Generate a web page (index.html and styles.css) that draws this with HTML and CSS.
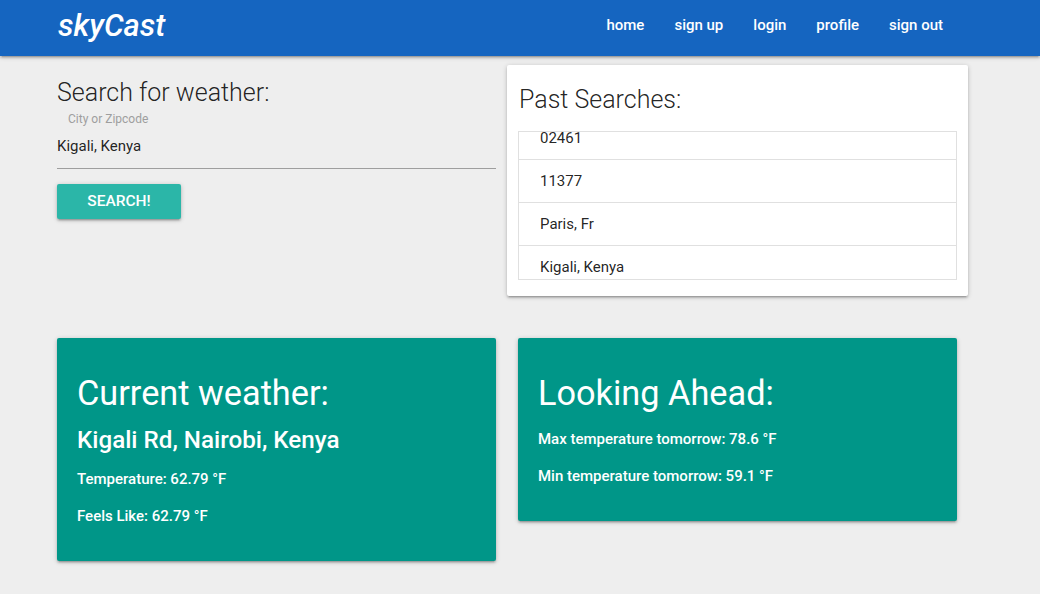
FILE: index.html
```html
<!DOCTYPE html>
<html lang="en">
<head>
<meta charset="utf-8">
<title>skyCast</title>
<link rel="stylesheet" href="styles.css">
</head>
<body>
<nav class="navbar">
  <div class="nav-inner">
    <a class="brand" href="#">skyCast</a>
    <ul class="nav-links">
      <li><a href="#">home</a></li>
      <li><a href="#">sign up</a></li>
      <li><a href="#">login</a></li>
      <li><a href="#">profile</a></li>
      <li><a href="#">sign out</a></li>
    </ul>
  </div>
</nav>
<main class="page">
  <section class="top-row">
    <div class="search-col">
      <h5 class="section-title">Search for weather:</h5>
      <div class="field">
        <label class="field-label">City or Zipcode</label>
        <div class="field-value">Kigali, Kenya</div>
      </div>
      <button class="btn">SEARCH!</button>
    </div>
    <div class="past-card">
      <h5 class="section-title past-title">Past Searches:</h5>
      <div class="past-list">
        <ul class="past-items">
          <li>02461</li>
          <li>11377</li>
          <li>Paris, Fr</li>
          <li>Kigali, Kenya</li>
        </ul>
      </div>
    </div>
  </section>
  <section class="bottom-row">
    <div class="weather-card">
      <h4>Current weather:</h4>
      <h5>Kigali Rd, Nairobi, Kenya</h5>
      <p>Temperature: 62.79 °F</p>
      <p>Feels Like: 62.79 °F</p>
    </div>
    <div class="weather-card">
      <h4>Looking Ahead:</h4>
      <p>Max temperature tomorrow: 78.6 °F</p>
      <p>Min temperature tomorrow: 59.1 °F</p>
    </div>
  </section>
</main>
</body>
</html>
```
FILE: styles.css
```css
* { box-sizing: border-box; }
html, body { margin: 0; padding: 0; }
body {
  background: #eeeeee;
  font-family: Roboto, "Noto Sans", "Liberation Sans", sans-serif;
  color: rgba(0,0,0,0.87);
  height: 594px;
  overflow: hidden;
}
.navbar {
  height: 56px;
  background: #1565c0;
  box-shadow: 0 2px 2px 0 rgba(0,0,0,0.14), 0 3px 1px -2px rgba(0,0,0,0.12), 0 1px 5px 0 rgba(0,0,0,0.2);
  position: relative;
  z-index: 2;
}
.nav-inner {
  height: 56px;
  display: flex;
  align-items: center;
  justify-content: space-between;
  padding: 0 82px 6px 58px;
}
.brand {
  color: #fff;
  text-decoration: none;
  font-size: 31px;
  font-style: italic;
  font-weight: 500;
  letter-spacing: 0;
}
.nav-links {
  list-style: none;
  margin: 0;
  padding: 0;
  display: flex;
}
.nav-links a {
  display: block;
  padding: 0 15px;
  color: #fff;
  text-decoration: none;
  font-size: 15px;
  font-weight: 500;
}
.page {
  padding: 9px 0 0 57px;
}
.top-row {
  display: grid;
  grid-template-columns: 439px 461px;
  column-gap: 11px;
  align-items: start;
}
.section-title {
  font-size: 25px;
  font-weight: 300;
  line-height: 1.1;
  margin: 0;
}
.search-col .section-title { margin-top: 14px; }
.field {
  border-bottom: 1px solid #9e9e9e;
  padding-bottom: 13px;
}
.field-label {
  display: block;
  padding-left: 11px;
  margin-top: 5px;
  font-size: 12px;
  color: #9e9e9e;
  line-height: 14px;
}
.field-value {
  margin-top: 11px;
  font-size: 15px;
  line-height: 18px;
}
.btn {
  margin-top: 15px;
  width: 124px;
  height: 35px;
  border: none;
  border-radius: 2px;
  background: #2bb6a8;
  color: #fff;
  font-family: inherit;
  font-size: 15.5px;
  font-weight: 500;
  box-shadow: 0 2px 2px 0 rgba(0,0,0,0.14), 0 3px 1px -2px rgba(0,0,0,0.12), 0 1px 5px 0 rgba(0,0,0,0.2);
  padding: 0;
}
.past-card {
  background: #fff;
  border-radius: 2px;
  box-shadow: 0 2px 2px 0 rgba(0,0,0,0.14), 0 3px 1px -2px rgba(0,0,0,0.12), 0 1px 5px 0 rgba(0,0,0,0.2);
  padding: 21px 11px 16px 11px;
}
.past-title { padding-left: 1px; margin-bottom: 17px; }
.past-list {
  height: 149px;
  border: 1px solid #e0e0e0;
  overflow: hidden;
}
.past-items {
  list-style: none;
  margin: -15px 0 0 0;
  padding: 0;
}
.past-items li {
  height: 43px;
  line-height: 42px;
  border-bottom: 1px solid #e0e0e0;
  padding-left: 21px;
  font-size: 15px;
}
.past-items li:last-child { border-bottom: none; }
.bottom-row {
  margin-top: 42px;
  display: grid;
  grid-template-columns: 439px 439px;
  column-gap: 22px;
  align-items: start;
}
.weather-card {
  background: #009688;
  color: #fff;
  border-radius: 2px;
  box-shadow: 0 2px 2px 0 rgba(0,0,0,0.14), 0 3px 1px -2px rgba(0,0,0,0.12), 0 1px 5px 0 rgba(0,0,0,0.2);
  padding: 20px 20px 20px 20px;
}
.weather-card h4 {
  font-size: 34.3px;
  font-weight: 400;
  line-height: 1.1;
  margin: 17px 0 15px 0;
}
.weather-card h5 {
  font-size: 24.2px;
  font-weight: 500;
  line-height: 1.1;
  margin: 0 0 13px 0;
}
.weather-card p {
  font-size: 15px;
  font-weight: 500;
  line-height: 24px;
  margin: 0 0 13px 0;
}
```
